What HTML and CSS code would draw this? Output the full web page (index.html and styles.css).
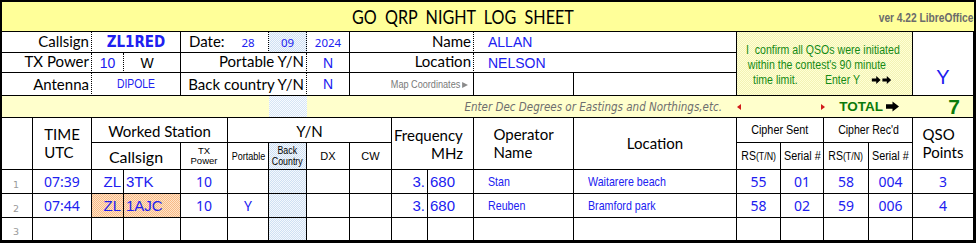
FILE: index.html
```html
<!DOCTYPE html>
<html>
<head>
<meta charset="utf-8">
<title>GO QRP Night Log Sheet</title>
<link rel="stylesheet" href="styles.css">
</head>
<body>
<div class="sheet">
  <!-- title row -->
  <div class="c s18 title">
    <span class="title-txt">GO&nbsp;&nbsp;QRP&nbsp;&nbsp;NIGHT&nbsp;&nbsp;LOG&nbsp;&nbsp;SHEET</span>
    <span class="ver"><span class="nw o-r x85">ver 4.22 LibreOffice</span></span>
  </div>

  <!-- station row 1 -->
  <div class="c s2 dr lbl jr">Callsign</div>
  <div class="c s2 call jc">ZL1RED</div>
  <div class="c nr lbl date">Date:</div>
  <div class="c dr small-val jc">28</div>
  <div class="c dr small-val jc blue-bg">09</div>
  <div class="c small-val jc">2024</div>
  <div class="c s3 dr lbl jr">Name</div>
  <div class="c s2 val pad-v">ALLAN</div>
  <div class="c s4 r3 confirm">
    <div class="confirm-txt">
      <div>I&nbsp;&nbsp;confirm all QSOs were initiated</div>
      <div class="cl2">within the contest's 90 minute</div>
      <div class="cl3">time limit.<span class="gap"></span>Enter Y<span class="arrows"><svg class="arr-s" viewBox="0 0 10 8"><path d="M0 2.5h5V0l5 4-5 4V5.5H0z"/></svg><svg class="arr-s" viewBox="0 0 10 8"><path d="M0 2.5h5V0l5 4-5 4V5.5H0z"/></svg></span></div>
    </div>
  </div>
  <div class="c r3 yes jc">Y</div>

  <!-- station row 2 -->
  <div class="c s2 dr lbl jr">TX Power</div>
  <div class="c dr val jc">10</div>
  <div class="c unit jc">W</div>
  <div class="c s3 dr lbl jr">Portable Y/N</div>
  <div class="c val jc">N</div>
  <div class="c s3 dr lbl jr">Location</div>
  <div class="c s2 val pad-v">NELSON</div>

  <!-- station row 3 -->
  <div class="c s2 dr lbl jr">Antenna</div>
  <div class="c s2 dipole jc"><span class="nw x83">DIPOLE</span></div>
  <div class="c s3 dr lbl jr">Back country Y/N</div>
  <div class="c val jc">N</div>
  <div class="c s3 map jr"><span class="nw o-r x83">Map Coordinates<span class="map-tri"></span></span></div>
  <div class="c"></div>
  <div class="c"></div>

  <!-- note band -->
  <div class="c s6 nr band"></div>
  <div class="c nr band-blue"></div>
  <div class="c s6 nr band hint jr">Enter Dec Degrees or Eastings and Northings,etc.</div>
  <div class="c s4 nr band total">
    <span class="tri-l"></span>
    <span class="tri-r"></span>
    <span class="total-txt">TOTAL</span>
    <svg class="arr-b" viewBox="0 0 14 11"><path d="M0 3h7V0l7 5.5-7 5.5V8H0z"/></svg>
  </div>
  <div class="c band grand jr">7</div>

  <!-- header row 1 -->
  <div class="c r2"></div>
  <div class="c r2 hd hd-top">TIME<br>UTC</div>
  <div class="c s3 hd jc ws">Worked Station</div>
  <div class="c s4 hd jc ws">Y/N</div>
  <div class="c s2 r2 hd freq"><span>Frequency</span><span class="mhz">MHz</span></div>
  <div class="c r2 hd hd-top">Operator<br>Name</div>
  <div class="c r2 hd jc loc">Location</div>
  <div class="c s2 hn jc"><span class="nw x90">Cipher Sent</span></div>
  <div class="c s2 hn jc"><span class="nw x88">Cipher Rec'd</span></div>
  <div class="c r2 hd hd-top">QSO<br>Points</div>

  <!-- header row 2 -->
  <div class="c s2 hd jc sub-call">Callsign</div>
  <div class="c hs jc">TX<br>Power</div>
  <div class="c hn-s jc"><span class="nw x82">Portable</span></div>
  <div class="c hn-s jc blue-bg"><span class="nw x80">Back<br>Country</span></div>
  <div class="c hs2 jc">DX</div>
  <div class="c hs2 jc">CW</div>
  <div class="c hn jc"><span class="nw x84"><span class="rs">RS</span><span class="tn">(T/N)</span></span></div>
  <div class="c hn jc"><span class="nw x90">Serial #</span></div>
  <div class="c hn jc"><span class="nw x84"><span class="rs">RS</span><span class="tn">(T/N)</span></span></div>
  <div class="c hn jc"><span class="nw x90">Serial #</span></div>

  <!-- log row 1 -->
  <div class="c rn">1</div>
  <div class="c dv jc">07:39</div>
  <div class="c dz jr">ZL</div>
  <div class="c dz">3TK</div>
  <div class="c dv jc">10</div>
  <div class="c dv jc"></div>
  <div class="c blue-bg"></div>
  <div class="c"></div>
  <div class="c"></div>
  <div class="c dz jr">3.</div>
  <div class="c dz">680</div>
  <div class="c dn"><span class="nw o-l x82">Stan</span></div>
  <div class="c dn"><span class="nw o-l x82">Waitarere beach</span></div>
  <div class="c dv jc">55</div>
  <div class="c dv jc">01</div>
  <div class="c dv jc">58</div>
  <div class="c dv jc">004</div>
  <div class="c dv jc">3</div>

  <!-- log row 2 -->
  <div class="c rn">2</div>
  <div class="c dv jc">07:44</div>
  <div class="c dz jr peach">ZL</div>
  <div class="c dz peach">1AJC</div>
  <div class="c dv jc">10</div>
  <div class="c dv jc">Y</div>
  <div class="c blue-bg"></div>
  <div class="c"></div>
  <div class="c"></div>
  <div class="c dz jr">3.</div>
  <div class="c dz">680</div>
  <div class="c dn"><span class="nw o-l x82">Reuben</span></div>
  <div class="c dn"><span class="nw o-l x82">Bramford park</span></div>
  <div class="c dv jc">58</div>
  <div class="c dv jc">02</div>
  <div class="c dv jc">59</div>
  <div class="c dv jc">006</div>
  <div class="c dv jc">4</div>

  <!-- log row 3 -->
  <div class="c rn">3</div>
  <div class="c"></div>
  <div class="c"></div>
  <div class="c"></div>
  <div class="c"></div>
  <div class="c"></div>
  <div class="c blue-bg"></div>
  <div class="c"></div>
  <div class="c"></div>
  <div class="c"></div>
  <div class="c"></div>
  <div class="c"></div>
  <div class="c"></div>
  <div class="c"></div>
  <div class="c"></div>
  <div class="c"></div>
  <div class="c"></div>
  <div class="c"></div>
</div>
</body>
</html>
```

FILE: styles.css
```css
html, body {
  margin: 0;
  padding: 0;
  background: #ffffff;
}

.sheet {
  width: 976px;
  height: 243px;
  box-sizing: border-box;
  border: 2px solid #000;
  display: grid;
  grid-template-columns: 31px 59px 32px 57px 47px 41px 38px 43px 42px 36px 46px 100px 163px 44px 43px 45px 44px 61px;
  grid-template-rows: 30px 21px 20px 23px 22px 25px 27px 24px 24px 23px;
  font-family: "Liberation Sans", Arial, sans-serif;
  color: #000;
  background: #fff;
}

/* generic cell */
.c {
  box-sizing: border-box;
  border-right: 1px solid #000;
  border-bottom: 1px solid #000;
  display: flex;
  align-items: center;
  white-space: nowrap;
  overflow: hidden;
  min-width: 0;
  min-height: 0;
}
.dr { border-right: 1px dotted #000; }
.nr { border-right: none; }

.s2 { grid-column: span 2; }
.s3 { grid-column: span 3; }
.s4 { grid-column: span 4; }
.s6 { grid-column: span 6; }
.s18 { grid-column: span 18; }
.r2 { grid-row: span 2; }
.r3 { grid-row: span 3; }

.jr { justify-content: flex-end; }
.jc { justify-content: center; }

/* narrow (condensed) text helper */
.nw {
  display: inline-block;
  transform-origin: center center;
  text-align: center;
}
.o-l { transform-origin: left center; text-align: left; }
.o-r { transform-origin: right center; text-align: right; }
.x80 { transform: scaleX(0.80); }
.x82 { transform: scaleX(0.82); }
.x83 { transform: scaleX(0.83); }
.x84 { transform: scaleX(0.84); }
.x85 { transform: scaleX(0.85); }
.x88 { transform: scaleX(0.88); }
.x90 { transform: scaleX(0.90); }

/* backgrounds */
.blue-bg {
  background: repeating-conic-gradient(#f4f8fd 0 25%, #cfe0f3 0 50%) 0 0 / 2px 2px;
}
.peach {
  background: repeating-conic-gradient(#ffe3c6 0 25%, #f7b987 0 50%) 0 0 / 2px 2px;
}

/* title */
.title {
  display: grid;
  grid-template-columns: 350px auto 1fr;
  align-items: end;
  background: #ffff99;
  border-right: none;
}
.title-txt {
  grid-column: 2;
  font-family: "Lato", sans-serif;
  font-size: 19px;
  line-height: 20px;
  padding-bottom: 4px;
  transform: scaleX(0.85);
  transform-origin: left center;
}
.ver {
  grid-column: 3;
  justify-self: end;
  font-weight: bold;
  font-size: 12px;
  color: #6b6b6b;
  padding-bottom: 6px;
  padding-right: 1px;
}

/* station info */
.lbl {
  font-family: "Lato", sans-serif;
  font-size: 15px;
  padding-right: 2px;
  align-items: flex-end;
  padding-bottom: 2px;
}
.date {
  padding-left: 8px;
}
.call {
  font-family: "DejaVu Sans Condensed", "DejaVu Sans", sans-serif;
  font-weight: bold;
  font-size: 15px;
  color: #2020f0;
}
.small-val {
  font-family: "Noto Sans", sans-serif;
  font-size: 11.5px;
  color: #2020f0;
}
.val {
  font-size: 14px;
  color: #2020f0;
}
.pad-v { padding-left: 14px; }
.unit {
  font-size: 14px;
  padding-right: 10px;
}
.dipole {
  font-size: 12.5px;
  color: #2020f0;
}
.map {
  font-size: 11px;
  color: #7a7a7a;
  padding-right: 5px;
}
.map-tri {
  display: inline-block;
  width: 0;
  height: 0;
  border-top: 3.5px solid transparent;
  border-bottom: 3.5px solid transparent;
  border-left: 7px solid #8a8a8a;
  margin-left: 2px;
}

.confirm {
  background: repeating-conic-gradient(#ffffd6 0 25%, #f3f3b4 0 50%) 0 0 / 2px 2px;
  justify-content: flex-start;
  padding-left: 9px;
  padding-top: 3px;
}
.confirm-txt {
  font-size: 12px;
  line-height: 15px;
  color: #138a13;
  transform: scaleX(0.88);
  transform-origin: left center;
}
.cl2 { padding-left: 2px; }
.cl3 {
  padding-left: 8px;
  display: flex;
  align-items: center;
}
.gap { display: inline-block; width: 31px; }
.arrows {
  display: inline-flex;
  margin-left: 13px;
}
.arr-s {
  width: 12px;
  height: 8px;
  fill: #000;
}
.yes {
  font-size: 20px;
  color: #2020f0;
  align-items: flex-end;
  padding-bottom: 6px;
}

/* note band */
.band {
  background: #ffffcc;
}
.band-blue {
  background: repeating-conic-gradient(#f8fbff 0 25%, #d6e5f5 0 50%) 0 0 / 2px 2px;
}
.hint {
  font-family: "DejaVu Sans Condensed", "DejaVu Sans", sans-serif;
  font-style: italic;
  font-size: 11.5px;
  color: #6e6e6e;
  padding-right: 15px;
}
.total {
  justify-content: flex-end;
}
.tri-l {
  width: 0;
  height: 0;
  border-top: 3px solid transparent;
  border-bottom: 3px solid transparent;
  border-right: 4px solid #d21a1a;
  margin-right: auto;
}
.tri-r {
  width: 0;
  height: 0;
  border-top: 3px solid transparent;
  border-bottom: 3px solid transparent;
  border-left: 4px solid #d21a1a;
  margin-right: 14px;
}
.total-txt {
  font-weight: bold;
  font-size: 13.5px;
  color: #0b7a0b;
  margin-right: 3px;
}
.arr-b {
  width: 13px;
  height: 11px;
  fill: #000;
  margin-right: 14px;
}
.grand {
  font-weight: bold;
  font-size: 21px;
  line-height: 21px;
  color: #0b7a0b;
  padding-right: 13px;
  overflow: visible;
}

/* table header */
.hd {
  font-family: "Lato", sans-serif;
  font-size: 15px;
  line-height: 18px;
}
.ws { padding-top: 2px; }
.hd-top {
  flex-direction: column;
  justify-content: flex-start;
  align-items: center;
  padding-top: 7px;
}
.freq {
  flex-direction: column;
  align-items: flex-start;
  justify-content: flex-start;
  padding-top: 8px;
  padding-left: 2px;
}
.mhz {
  align-self: flex-end;
  padding-right: 10px;
}
.loc { padding-bottom: 2px; }
.sub-call { font-size: 16px; padding-top: 2px; }
.hn {
  font-size: 12px;
}
.hn-s {
  font-size: 11px;
  line-height: 11px;
}
.hs {
  font-size: 9.5px;
  line-height: 10px;
  text-align: center;
}
.hs2 {
  font-size: 11px;
}
.rs { font-size: 12.5px; }
.tn { font-size: 10.5px; }

/* log rows */
.rn {
  font-family: "DejaVu Sans", sans-serif;
  font-size: 9.5px;
  color: #9a9a9a;
  align-items: flex-end;
  padding-left: 11px;
  padding-bottom: 3px;
}
.dv {
  font-family: "Noto Sans", sans-serif;
  font-size: 14px;
  color: #2020f0;
}
.dz {
  font-size: 15px;
  color: #2020f0;
  padding-left: 2px;
  padding-right: 2px;
}
.dn {
  font-size: 13px;
  color: #2020f0;
  padding-left: 14px;
}
```
